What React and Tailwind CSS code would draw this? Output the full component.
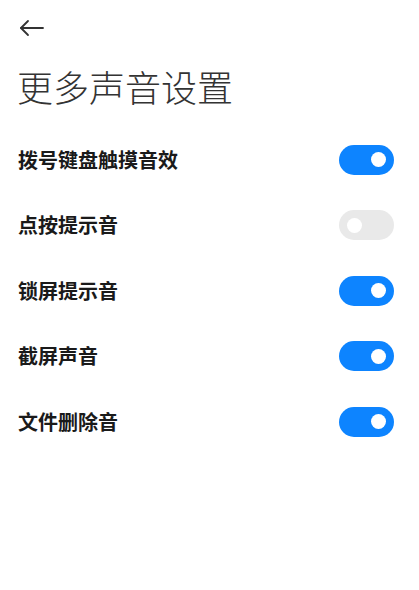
import { useState } from 'react';

const initialItems = [
  { label: '拨号键盘触摸音效', on: true },
  { label: '点按提示音', on: false },
  { label: '锁屏提示音', on: true },
  { label: '截屏声音', on: true },
  { label: '文件删除音', on: true },
];

function Toggle({ on, onClick }) {
  return (
    <button
      onClick={onClick}
      className={`relative flex items-center w-[55px] h-[30px] rounded-full px-[8px] ${on ? 'bg-[#0d84ff] justify-end' : 'bg-[#e9e9e9] justify-start'}`}
    >
      <span className="block w-[15px] h-[15px] rounded-full bg-white" />
    </button>
  );
}

export default function App() {
  const [items, setItems] = useState(initialItems);

  const flip = (i) => {
    setItems((prev) => prev.map((it, idx) => (idx === i ? { ...it, on: !it.on } : it)));
  };

  return (
    <div
      className="w-[419px] h-[590px] bg-white text-[#1a1a1a] overflow-hidden"
      style={{ fontFamily: "'Noto Sans CJK SC', 'Noto Sans', sans-serif" }}
    >
      {/* Header */}
      <div className="pt-[18px] pl-[18px]">
        <svg width="28" height="20" viewBox="0 0 28 20" fill="none" stroke="#333" strokeWidth="1.8" strokeLinecap="round" strokeLinejoin="round">
          <path d="M3 10 H25" />
          <path d="M10 3 L3 10 L10 17" />
        </svg>
      </div>
      <h1 className="mt-[28px] pl-[17px] text-[36px] leading-[40px] font-light text-[#333]">
        更多声音设置
      </h1>

      {/* Settings list */}
      <div className="mt-[21px] flex flex-col">
        {items.map((item, i) => (
          <div key={i} className="flex items-center justify-between h-[65.5px] pl-[18px] pr-[25px]">
            <span className="text-[20px] leading-[26px] font-semibold">{item.label}</span>
            <Toggle on={item.on} onClick={() => flip(i)} />
          </div>
        ))}
      </div>
    </div>
  );
}
